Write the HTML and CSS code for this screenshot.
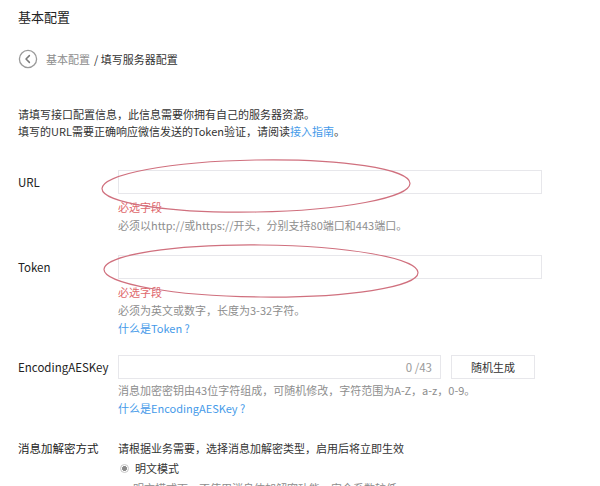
FILE: index.html
```html
<!DOCTYPE html>
<html lang="zh-CN">
<head>
    <meta charset="UTF-8">
    <title>基本配置</title>
    <link rel="stylesheet" href="styles.css">
</head>
<body>
    <div class="page">
        <h1 class="title">基本配置</h1>

        <div class="crumbs">
            <span class="back">
                <svg width="20" height="20" viewBox="0 0 20 20">
                    <circle cx="10" cy="10" r="8.6" fill="none" stroke="#9a9a9a" stroke-width="1.3"/>
                    <path d="M11.4 6.6 L8 10 L11.4 13.4" fill="none" stroke="#7a7a7a" stroke-width="1.5" stroke-linecap="round" stroke-linejoin="round"/>
                </svg>
            </span>
            <span class="crumb-prev">基本配置</span>
            <span class="crumb-cur">/ 填写服务器配置</span>
        </div>

        <div class="intro">
            <p>请填写接口配置信息，此信息需要你拥有自己的服务器资源。</p>
            <p>填写的URL需要正确响应微信发送的Token验证，请阅读<a href="#">接入指南</a>。</p>
        </div>

        <div class="field">
            <label class="field-label">URL</label>
            <div class="field-body">
                <div class="input"></div>
                <p class="error">必选字段</p>
                <p class="hint">必须以http://或https://开头，分别支持80端口和443端口。</p>
            </div>
        </div>

        <div class="field">
            <label class="field-label">Token</label>
            <div class="field-body">
                <div class="input"></div>
                <p class="error">必选字段</p>
                <p class="hint">必须为英文或数字，长度为3-32字符。</p>
                <p class="hint"><a href="#">什么是Token ?</a></p>
            </div>
        </div>

        <div class="field aes">
            <label class="field-label">EncodingAESKey</label>
            <div class="field-body">
                <div class="input-group">
                    <div class="input short"><span class="count">0 /43</span></div>
                    <button class="btn">随机生成</button>
                </div>
                <p class="hint">消息加密密钥由43位字符组成，可随机修改，字符范围为A-Z，a-z，0-9。</p>
                <p class="hint"><a href="#">什么是EncodingAESKey ?</a></p>
            </div>
        </div>

        <div class="field mode">
            <label class="field-label">消息加解密方式</label>
            <div class="field-body">
                <p class="lead">请根据业务需要，选择消息加解密类型，启用后将立即生效</p>
                <p class="radio"><span class="dot"></span>明文模式</p>
                <p class="hint sub">明文模式下，不使用消息体加解密功能，安全系数较低</p>
            </div>
        </div>

        <svg class="marks" width="600" height="486" viewBox="0 0 600 486">
            <ellipse cx="256" cy="186" rx="154" ry="26" transform="rotate(-1 256 186)" fill="none" stroke="#d0707e" stroke-width="1.2"/>
            <ellipse cx="261" cy="271" rx="157" ry="26" transform="rotate(0.6 261 271)" fill="none" stroke="#d0707e" stroke-width="1.2"/>
        </svg>
    </div>
</body>
</html>
```

FILE: styles.css
```css
:root {
    --text-color: #222;
    --muted-color: #8d8d8d;
    --border-color: #e7e7eb;
    --link-color: #459ae9;
    --error-color: #e0676b;
}
* {
    box-sizing: border-box;
}
body {
    margin: 0;
    background: #fff;
    color: var(--text-color);
    font-family: "Noto Sans CJK SC", "Noto Sans", sans-serif;
    font-size: 11px;
}
p {
    margin: 0;
}
a {
    color: var(--link-color);
    text-decoration: none;
}
.page {
    position: relative;
    height: 486px;
    overflow: hidden;
    padding: 8px 18px 0;
}
.title {
    margin: 0;
    font-size: 13px;
    font-weight: normal;
    line-height: 18px;
}
.crumbs {
    display: flex;
    align-items: center;
    gap: 8px;
    height: 20px;
    margin-top: 23px;
    font-size: 11px;
}
.back {
    display: flex;
}
.crumb-prev {
    color: var(--muted-color);
}
.crumb-cur {
    margin-left: -4px;
    color: #333;
}
.intro {
    margin-top: 37px;
    line-height: 17px;
    color: #333;
}
.field {
    display: flex;
    margin-top: 21px;
}
.intro + .field {
    margin-top: 30px;
}
.field-label {
    width: 100px;
    flex: none;
    line-height: 24px;
    font-size: 11.5px;
}
.field-body {
    flex: 1;
}
.input {
    width: 424px;
    height: 24px;
    border: 1px solid var(--border-color);
    background: #fff;
}
.input-group {
    display: flex;
    gap: 10px;
}
.input.short {
    width: 323px;
    display: flex;
    justify-content: flex-end;
    align-items: center;
    padding-right: 8px;
}
.count {
    color: #9a9a9a;
    font-size: 11.5px;
}
.btn {
    width: 84px;
    height: 24px;
    border: 1px solid var(--border-color);
    background: #fff;
    font-family: inherit;
    font-size: 11px;
    color: #333;
    padding: 0;
}
.error {
    margin-top: 4px;
    color: var(--error-color);
    line-height: 18px;
}
.hint {
    color: var(--muted-color);
    line-height: 18px;
}
.input-group + .hint {
    margin-top: 2px;
}
.aes {
    margin-top: 18px;
}
.mode {
    margin-top: 22px;
}
.mode .field-label,
.lead {
    line-height: 18px;
}
.lead {
    color: #333;
}
.radio {
    display: flex;
    align-items: center;
    gap: 6px;
    margin-top: 2px;
    padding-left: 2px;
    line-height: 18px;
    color: #333;
}
.dot {
    width: 9px;
    height: 9px;
    border-radius: 50%;
    border: 1px solid #c8c8c8;
    background: radial-gradient(circle, #8a8a8a 0 2.2px, #fff 2.6px);
}
.hint.sub {
    margin-top: 2px;
    padding-left: 15px;
}
.marks {
    position: absolute;
    top: 0;
    left: 0;
    pointer-events: none;
}
```
